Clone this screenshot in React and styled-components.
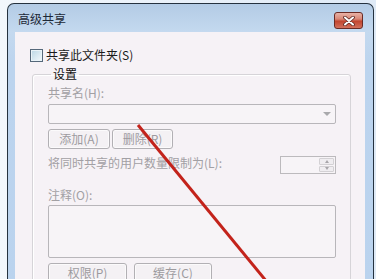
import React from "react";
import styled, { createGlobalStyle } from "styled-components";

const Global = createGlobalStyle`
  html, body { margin: 0; padding: 0; }
  body {
    background: #eaf1f8;
    font-family: "Noto Sans CJK SC", "Noto Sans", sans-serif;
    font-size: 12px;
  }
`;

const Page = styled.div`
  position: relative;
  width: 376px;
  height: 279px;
  overflow: hidden;
  padding: 3px 0 0 7px;
  box-sizing: border-box;
  background: linear-gradient(to right, #f2f7fc, #dfeaf6);
`;

const Window = styled.div`
  width: 367px;
  height: 300px;
  box-sizing: border-box;
  border: 1px solid #25323f;
  border-bottom: none;
  border-radius: 7px 7px 0 0;
  background: linear-gradient(to bottom, #b3cbe5 0px, #c4d9ef 28px, #bcd4ee 60px, #bad3ee 100%);
  padding: 0 8px 0 7px;
  display: flex;
  flex-direction: column;
`;

const TitleBar = styled.div`
  height: 28px;
  display: flex;
  align-items: flex-start;
  justify-content: space-between;
`;

const Title = styled.div`
  margin: 8px 0 0 3px;
  color: #1c2836;
  font-size: 12px;
  line-height: 14px;
`;

const CloseButton = styled.div`
  width: 29px;
  height: 17px;
  margin: 8px 2px 0 0;
  box-sizing: border-box;
  border: 1px solid #6a2b25;
  border-radius: 3px;
  background: linear-gradient(to bottom, #e8b2a6 0%, #d98877 40%, #c2452f 55%, #d2705c 100%);
  display: flex;
  align-items: center;
  justify-content: center;
`;

const Content = styled.div`
  flex: 1;
  min-width: 0;
  background: #f6f2f6;
  padding: 16px 15px 0 15px;
  display: flex;
  flex-direction: column;
`;

const CheckRow = styled.label`
  display: flex;
  align-items: center;
  gap: 3px;
  color: #1a1a1a;
  line-height: 14px;
  height: 14px;
`;

const CheckBox = styled.span`
  width: 13px;
  height: 13px;
  box-sizing: border-box;
  border: 1px solid #55687a;
  background: linear-gradient(135deg, #b9d6e4 0%, #dcebf3 60%, #f3f9fc 100%);
  box-shadow: inset 0 0 0 1px #e9f3f8;
`;

const Group = styled.fieldset`
  margin: 5px 0 0 2px;
  width: 319px;
  box-sizing: border-box;
  padding: 0 14px 0 15px;
  border: 1px solid #d6d4d8;
  border-radius: 3px;
  box-shadow: inset 1px 1px 0 #ffffff;
  min-width: 0;
  display: flex;
  flex-direction: column;
`;

const Legend = styled.legend`
  margin-left: 3px;
  padding: 0 2px;
  color: #111;
  font-size: 12px;
  line-height: 14px;
`;

const Label = styled.div`
  color: #a2a0a4;
  line-height: 14px;
  margin-top: ${(p) => p.$mt || 0}px;
`;

const Combo = styled.div`
  margin-top: 4px;
  height: 20px;
  box-sizing: border-box;
  border: 1px solid #b8b6ba;
  border-radius: 2px;
  background: #f7f4f7;
  display: flex;
  align-items: center;
  justify-content: flex-end;
  padding-right: 4px;
`;

const Arrow = styled.span`
  width: 0;
  height: 0;
  border-left: 4px solid transparent;
  border-right: 4px solid transparent;
  border-top: 4px solid #a9a9ac;
`;

const ButtonRow = styled.div`
  display: flex;
  gap: ${(p) => p.$gap}px;
  margin-top: ${(p) => p.$mt}px;
`;

const Button = styled.div`
  width: ${(p) => p.$w}px;
  height: 20px;
  flex-shrink: 0;
  box-sizing: border-box;
  border: 1px solid #b2b0b4;
  border-radius: 3px;
  background: #f4f1f4;
  box-shadow: inset 0 0 0 1px #fbfafb;
  color: #9d9b9f;
  display: flex;
  align-items: center;
  justify-content: center;
  line-height: 14px;
`;

const LimitRow = styled.div`
  margin-top: 7px;
  display: flex;
  align-items: flex-start;
  justify-content: space-between;
`;

const Spin = styled.div`
  width: 56px;
  height: 18px;
  box-sizing: border-box;
  border: 1px solid #bcbabd;
  background: #f7f4f7;
  display: flex;
  justify-content: flex-end;
  padding: 1px;
`;

const SpinButtons = styled.div`
  width: 15px;
  display: flex;
  flex-direction: column;
  gap: 1px;
`;

const SpinHalf = styled.div`
  flex: 1;
  border: 1px solid #d3d1d4;
  border-radius: 1px;
  background: #efedf0;
  display: flex;
  align-items: center;
  justify-content: center;
`;

const TinyArrow = styled.span`
  width: 0;
  height: 0;
  border-left: 2.5px solid transparent;
  border-right: 2.5px solid transparent;
  ${(p) => (p.$up ? "border-bottom: 3px solid #a8a6aa;" : "border-top: 3px solid #a8a6aa;")}
`;

const TextArea = styled.div`
  margin-top: 3px;
  height: 53px;
  box-sizing: border-box;
  border: 1px solid #b8b6ba;
  border-radius: 2px;
  background: #f7f4f7;
`;

const Overlay = styled.svg`
  position: absolute;
  left: 0;
  top: 0;
  pointer-events: none;
`;

export default function App() {
  return (
    <>
      <Global />
      <Page>
        <Window>
          <TitleBar>
            <Title>高级共享</Title>
            <CloseButton>
              <svg width="14" height="10" viewBox="0 0 14 10">
                <path d="M3 1.5 L11 8.5 M11 1.5 L3 8.5" stroke="#5a2620" strokeWidth="3.6" strokeLinecap="round" />
                <path d="M3 1.5 L11 8.5 M11 1.5 L3 8.5" stroke="#ffffff" strokeWidth="2" strokeLinecap="round" />
              </svg>
            </CloseButton>
          </TitleBar>
          <Content>
            <CheckRow>
              <CheckBox />
              共享此文件夹(S)
            </CheckRow>
            <Group>
              <Legend>设置</Legend>
              <Label $mt={5}>共享名(H):</Label>
              <Combo>
                <Arrow />
              </Combo>
              <ButtonRow $gap={2} $mt={5}>
                <Button $w={62}>添加(A)</Button>
                <Button $w={61}>删除(R)</Button>
              </ButtonRow>
              <LimitRow>
                <Label>将同时共享的用户数量限制为(L):</Label>
                <Spin>
                  <SpinButtons>
                    <SpinHalf>
                      <TinyArrow $up />
                    </SpinHalf>
                    <SpinHalf>
                      <TinyArrow />
                    </SpinHalf>
                  </SpinButtons>
                </Spin>
              </LimitRow>
              <Label $mt={14}>注释(O):</Label>
              <TextArea />
              <ButtonRow $gap={7} $mt={5}>
                <Button $w={79}>权限(P)</Button>
                <Button $w={78}>缓存(C)</Button>
              </ButtonRow>
            </Group>
          </Content>
        </Window>
        <Overlay width="376" height="279" viewBox="0 0 376 279">
          <line x1="138" y1="125" x2="267" y2="282" stroke="#c3231b" strokeWidth="3" />
        </Overlay>
      </Page>
    </>
  );
}
